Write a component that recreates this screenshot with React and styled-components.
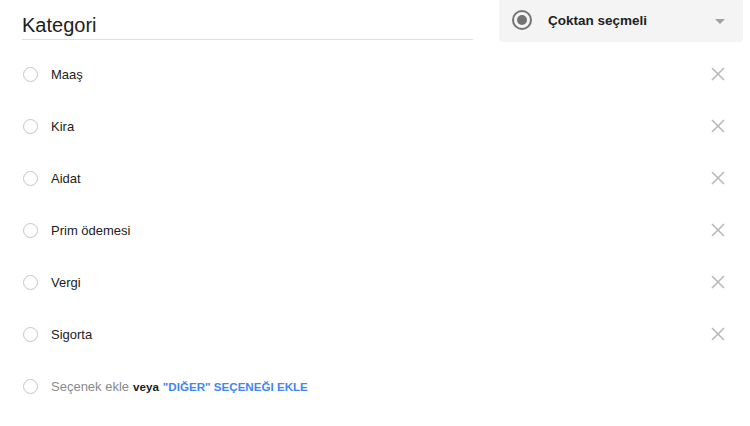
import React from "react";
import styled, { createGlobalStyle } from "styled-components";

const Global = createGlobalStyle`
  html, body { margin: 0; padding: 0; background: #fff; }
  body { font-family: "Liberation Sans", Arial, sans-serif; color: #212121; }
`;

const Page = styled.div`
  width: 750px;
  height: 426px;
  box-sizing: border-box;
  padding: 0 7px 0 22px;
`;

const Header = styled.div`
  display: flex;
  align-items: flex-start;
  gap: 26px;
  height: 42px;
`;

const TitleField = styled.div`
  width: 451px;
  flex-shrink: 0;
  height: 40px;
  box-sizing: border-box;
  border-bottom: 1px solid #e0e0e0;
  font-size: 20px;
  line-height: 20px;
  padding-top: 15px;
  color: #212121;
`;

const TypeSelect = styled.div`
  width: 244px;
  flex-shrink: 0;
  height: 42px;
  box-sizing: border-box;
  background: #f4f4f4;
  border-radius: 0 0 3px 3px;
  display: flex;
  align-items: center;
  padding: 0 18px 0 13px;
`;

const BigRadio = styled.span`
  width: 20px;
  height: 20px;
  box-sizing: border-box;
  border: 2px solid #737373;
  border-radius: 50%;
  display: flex;
  align-items: center;
  justify-content: center;
  margin-top: -2px;
  &::after {
    content: "";
    width: 10px;
    height: 10px;
    border-radius: 50%;
    background: #737373;
  }
`;

const TypeLabel = styled.span`
  flex: 1;
  margin-left: 16px;
  font-size: 13.5px;
  font-weight: bold;
  color: #212121;
  margin-top: -2px;
`;

const Caret = styled.span`
  width: 0;
  height: 0;
  border-left: 5px solid transparent;
  border-right: 5px solid transparent;
  border-top: 5px solid #a0a0a0;
  margin-top: 1px;
`;

const List = styled.div`
  margin-top: 6px;
  padding-right: 18px;
  display: flex;
  flex-direction: column;
`;

const Row = styled.div`
  height: 52px;
  display: flex;
  align-items: center;
`;

const Radio = styled.span`
  width: 15px;
  height: 15px;
  box-sizing: border-box;
  border: 1.5px solid #c6c6c6;
  border-radius: 50%;
  margin-left: 1px;
  flex-shrink: 0;
`;

const Label = styled.span`
  flex: 1;
  margin-left: 13px;
  font-size: 13px;
  color: ${(p) => (p.$muted ? "#8a8a8a" : "#212121")};
`;

const Strong = styled.span`
  font-size: 11.6px;
  font-weight: bold;
  color: ${(p) => (p.$blue ? "#4285f4" : "#212121")};
  margin-left: 4px;
`;

const Remove = styled.svg`
  width: 14px;
  height: 14px;
  flex-shrink: 0;
`;

const options = ["Maaş", "Kira", "Aidat", "Prim ödemesi", "Vergi", "Sigorta"];

export default function App() {
  return (
    <>
      <Global />
      <Page>
        <Header>
          <TitleField>Kategori</TitleField>
          <TypeSelect>
            <BigRadio />
            <TypeLabel>Çoktan seçmeli</TypeLabel>
            <Caret />
          </TypeSelect>
        </Header>
        <List>
          {options.map((o) => (
            <Row key={o}>
              <Radio />
              <Label>{o}</Label>
              <Remove viewBox="0 0 14 14">
                <path d="M1 1L13 13M13 1L1 13" stroke="#b8b8b8" strokeWidth="1.6" fill="none" />
              </Remove>
            </Row>
          ))}
          <Row>
            <Radio />
            <Label $muted>
              Seçenek ekle
              <Strong>veya</Strong>
              <Strong $blue>"DIĞER" SEÇENEĞI EKLE</Strong>
            </Label>
          </Row>
        </List>
      </Page>
    </>
  );
}
